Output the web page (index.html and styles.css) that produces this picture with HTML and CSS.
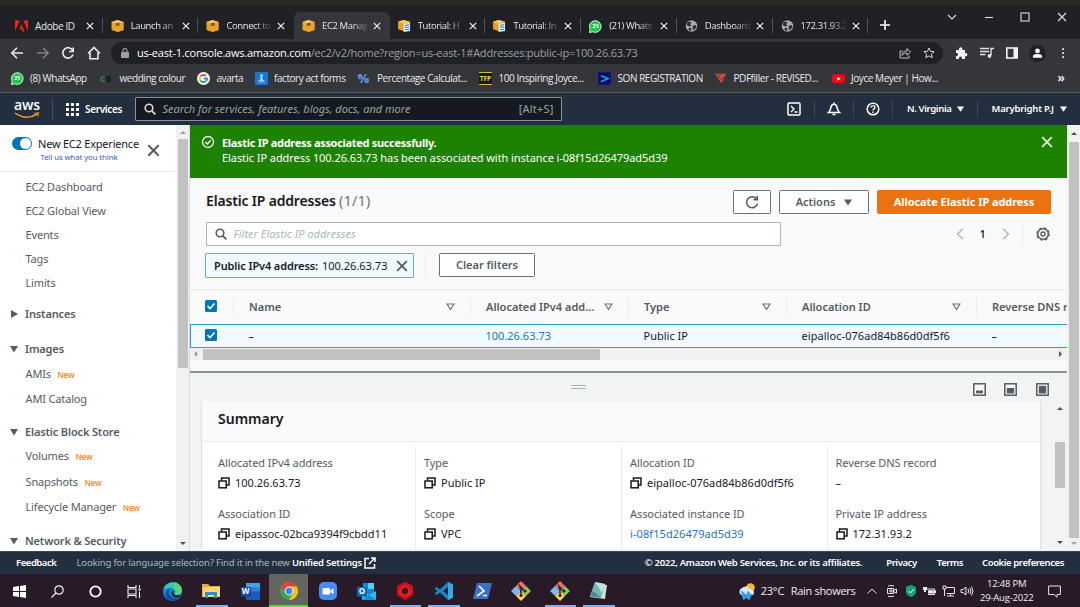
FILE: index.html
```html
<!DOCTYPE html>
<html lang="en">
<head>
<meta charset="utf-8">
<title>EC2 Management Console</title>
<link rel="stylesheet" href="styles.css">
</head>
<body>
<svg class="defs" aria-hidden="true">
  <symbol id="x" viewBox="0 0 10 10"><path d="M1 1 9 9M9 1 1 9" fill="none" stroke="currentColor" stroke-width="1.5"/></symbol>
  <symbol id="cube" viewBox="0 0 12 12"><path d="M0 2 6 0 12 2 12 10 6 12 0 10Z" fill="#e9a425"/><path d="M0 2 6 4 12 2 6 0Z" fill="#f6c467"/><path d="M6 4V12L12 10V2Z" fill="#e6a32d"/><path d="M4 3.5 8 2.5V6L6.5 5.4 5 6.5Z" fill="#7a5a1e"/></symbol>
  <symbol id="doc" viewBox="0 0 14 13"><path d="M0 2 6 0 13 2V10L6 12 0 10Z" fill="#e99c20"/><path d="M0 2 6 4 13 2 6 0Z" fill="#ffc963"/><path d="M6 4 13 3V12L6 13Z" fill="#d6efff"/><path d="M7.5 6 12 5M7.5 8 12 7.5M7.5 10.5 12 10" stroke="#247cb3"/></symbol>
  <symbol id="wa" viewBox="0 0 14 14"><path d="M.5 13.5 1.2 10A6.3 6.3 0 1 1 4 12.7Z" fill="#23c653" stroke="#e8ffe9" stroke-width="1"/></symbol>
  <symbol id="globe" viewBox="0 0 12 12"><circle cx="6" cy="6" r="5.8" fill="#a8abaf"/><path d="M2 2.5Q5 1 6 2.5L4.5 4.2 6 5.5 4 6.5 1 5ZM7 6 10.5 5 11 7 8.5 10 7.5 9.8ZM3.5 7.5 6 8.5 5.5 11 3 9.8Z" fill="#292b2e"/></symbol>
  <symbol id="search" viewBox="0 0 12 12"><circle cx="5" cy="5" r="3.8" fill="none" stroke="currentColor" stroke-width="1.6"/><path d="m7.8 7.8 3.6 3.6" stroke="currentColor" stroke-width="1.8"/></symbol>
  <symbol id="tri" viewBox="0 0 8 6"><path d="M0 0H8L4 6Z" fill="currentColor"/></symbol>
  <symbol id="sort" viewBox="0 0 9 8"><path d="M1 1H8L4.500 6.500Z" fill="none" stroke="#687078" stroke-width="1.2"/></symbol>
  <symbol id="check" viewBox="0 0 12 12"><rect width="12" height="12" rx="1.5" fill="#0073bb"/><path d="m2.500 6 2.500 2.600 4.500-5.200" fill="none" stroke="#fff" stroke-width="1.6"/></symbol>
  <symbol id="copy" viewBox="0 0 12 12"><path d="M3.500 3.500V1H11V8H8.500" fill="none" stroke="#16191f" stroke-width="1.5"/><rect x="1" y="4" width="7.200" height="6.800" fill="none" stroke="#16191f" stroke-width="1.5"/></symbol>
  <symbol id="git" viewBox="0 0 20 20"><path d="M10 0 15 5 10 10 5 5Z" fill="#f07168"/><path d="M5 5 10 10 5 15 0 10Z" fill="#80b7ef"/><path d="M15 5 20 10 15 15 10 10Z" fill="#91c75b"/><path d="M10 10 15 15 10 20 5 15Z" fill="#f7d45e"/><path d="M8 3.500 10 7V15M10 7 14 10" fill="none" stroke="#302529" stroke-width="1.500"/><circle cx="10" cy="7" r="1.600" fill="#302529"/><circle cx="14" cy="10" r="1.600" fill="#302529"/><circle cx="10" cy="14.500" r="1.600" fill="#302529"/></symbol>
</svg>

<div class="strip"></div>
<div class="tabs">
  <div class="tab"><svg class="fav" viewBox="0 0 14 12"><path d="M0 0H5L0 12ZM9 0H14V12ZM7 4 10.500 12H8L7 9.600H4.800Z" fill="#f22418"/></svg><span>Adobe ID</span><svg class="close"><use href="#x"/></svg></div>
  <div class="tab sep fade"><svg class="fav"><use href="#cube"/></svg><span>Launch an</span><svg class="close"><use href="#x"/></svg></div>
  <div class="tab sep fade"><svg class="fav"><use href="#cube"/></svg><span>Connect to</span><svg class="close"><use href="#x"/></svg></div>
  <div class="tab active fade"><svg class="fav"><use href="#cube"/></svg><span>EC2 Manag</span><svg class="close"><use href="#x"/></svg></div>
  <div class="tab fade"><svg class="fav"><use href="#doc"/></svg><span>Tutorial: H</span><svg class="close"><use href="#x"/></svg></div>
  <div class="tab sep fade"><svg class="fav"><use href="#doc"/></svg><span>Tutorial: In</span><svg class="close"><use href="#x"/></svg></div>
  <div class="tab sep fade"><i class="fav wa"><svg><use href="#wa"/></svg><b>21</b></i><span>(21) Whats</span><svg class="close"><use href="#x"/></svg></div>
  <div class="tab sep fade"><svg class="fav"><use href="#globe"/></svg><span>Dashboard</span><svg class="close"><use href="#x"/></svg></div>
  <div class="tab sep fade"><svg class="fav"><use href="#globe"/></svg><span>172.31.93.2</span><svg class="close"><use href="#x"/></svg></div>
  <div class="newtab sep"><svg width="10" height="10" viewBox="0 0 10 10"><path d="M5 0V10M0 5H10" stroke="#fff" stroke-width="1.600"/></svg></div>
  <div class="winctl">
    <svg viewBox="0 0 10 10"><path d="m1 3 4 4 4-4" /></svg>
    <svg viewBox="0 0 10 10"><path d="M1 5.500H9"/></svg>
    <svg viewBox="0 0 10 10"><rect x="1" y="1" width="8" height="8"/></svg>
    <svg viewBox="0 0 10 10"><path d="m1 1 8 8M9 1 1 9"/></svg>
  </div>
</div>

<div class="toolbar">
  <div class="nav">
    <svg viewBox="0 0 14 14"><path d="M13 7H2M7 1.800 1.800 7 7 12.200"/></svg>
    <svg class="dim" viewBox="0 0 14 14"><path d="M1 7H12M7 1.800 12.200 7 7 12.200"/></svg>
    <svg viewBox="0 0 14 14"><path d="M11.600 4.300A5.200 5.200 0 1 0 12 8.500M12.200 1.500V5.500H8"/></svg>
    <svg viewBox="0 0 14 14"><path d="M1 7.500 7 1.500 13 7.500M3 6.500V12.800H11V6.500"/></svg>
  </div>
  <div class="url">
    <svg class="lock" viewBox="0 0 8 10"><rect y="4" width="8" height="6" rx="1" fill="#9aa0a6"/><path d="M2 4V2.500a2 2 0 0 1 4 0V4" fill="none" stroke="#9aa0a6" stroke-width="1.200"/></svg>
    <span class="addr"><b>us-east-1.console.aws.amazon.com</b>/ec2/v2/home?region=us-east-1#Addresses:public-ip=100.26.63.73</span>
    <svg class="share" viewBox="0 0 12 12"><path d="M3.500 4H1V11H10V8.500M3 8.500C3 5 5 4 8 4V1.500L11.500 5 8 8.200V6C6 6 4 6.500 3 8.500Z" fill="none" stroke="#bdc1c6"/></svg>
    <svg class="star" viewBox="0 0 12 12"><path d="m6 1 1.500 3.300 3.600.4-2.700 2.400.8 3.600L6 8.900 2.800 10.700l.8-3.600L.9 4.700l3.600-.4Z" fill="none" stroke="#d5d7da"/></svg>
  </div>
  <div class="ext">
    <svg viewBox="0 0 14 14"><path d="M2 4H5V3a1.600 1.600 0 0 1 3.400 0V4H11V7h.8a1.600 1.600 0 0 1 0 3.200H11V13H8V12a1.500 1.500 0 0 0-3 0v1H2V10H3a1.600 1.600 0 0 0 0-3H2Z" fill="#f1f3f4"/></svg>
    <svg viewBox="0 0 14 14"><path d="M0 2.500H9M0 5.500H9M0 8.500H5.500M11 9.500V2.500H14" fill="none" stroke="#e2e4e6" stroke-width="1.400"/><circle cx="9.500" cy="10" r="1.900" fill="#e2e4e6"/></svg>
    <svg viewBox="0 0 14 14"><rect x="1.800" y="2" width="10.400" height="10" fill="none" stroke="#f1f3f4" stroke-width="1.600"/><path d="M8.500 2H12V12H8.500Z" fill="#f1f3f4"/></svg>
    <svg class="ava" viewBox="0 0 18 18"><circle cx="9" cy="9" r="9" fill="#202124"/><circle cx="9" cy="6.300" r="2.500" fill="#fff"/><path d="M4.200 13.500V12q0-2.400 4.800-2.400T13.800 12v1.500Z" fill="#fff"/></svg>
    <svg viewBox="0 0 14 14"><path d="M6.200 2.200H8V4H6.200ZM6.200 6.200H8V8H6.200ZM6.200 10.200H8V12H6.200Z" fill="#e8eaed"/></svg>
  </div>
</div>

<div class="bookmarks">
  <div class="bm b1"><i class="wa"><svg><use href="#wa"/></svg><b>21</b></i><span>(8) WhatsApp</span></div>
  <div class="bm b2"><i class="cb"><em>C</em>B</i><span>wedding colour</span></div>
  <div class="bm b3"><svg viewBox="0 0 14 14"><circle cx="7" cy="7" r="7" fill="#fff"/><g fill="none" stroke-width="1.900"><path d="M9.800 4.200A4 4 0 0 0 3.600 4.900" stroke="#ea4335"/><path d="M3.600 4.900a4 4 0 0 0 0 4.200" stroke="#fbbc05"/><path d="M3.600 9.100A4 4 0 0 0 9.700 9.800" stroke="#34a853"/><path d="M9.700 9.800A4 4 0 0 0 11 7H7.200" stroke="#4285f4"/></g></svg><span>avarta</span></div>
  <div class="bm b4"><svg viewBox="0 0 14 14"><rect width="14" height="14" fill="#1676d2"/><circle cx="7" cy="4" r="1.500" fill="#b8dbfa"/><path d="M6 6H8V9H10V10H4V9H6ZM3 11.500H11" fill="#b8dbfa" stroke="#b8dbfa" stroke-width=".5"/></svg><span>factory act forms</span></div>
  <div class="bm b5"><i class="pct">%</i><span>Percentage Calculat...</span></div>
  <div class="bm b6"><i class="tfp">TFP</i><span>100 Inspiring Joyce...</span></div>
  <div class="bm b7"><svg viewBox="0 0 14 14"><rect x=".5" y=".5" width="13" height="13" fill="#03077c"/><path d="m3 4 8 3-8 3.500" fill="none" stroke="#1aa9c8" stroke-width="1.600"/></svg><span>SON REGISTRATION</span></div>
  <div class="bm b8"><svg viewBox="0 0 14 14"><path d="M1 2H13L8 12Z" fill="#e4443c"/><path d="M1 2H9L5 7Z" fill="#8d4f51"/><path d="M5.500 5.500 8 8.500 11 4.500" fill="none" stroke="#8d2f31" stroke-width="1"/></svg><span>PDFfiller - REVISED...</span></div>
  <div class="bm b9"><svg viewBox="0 0 14 14"><rect x="0" y="2.500" width="14" height="9.500" rx="2.500" fill="#f40612"/><path d="m5.500 5 4 2.200-4 2.200Z" fill="#fff"/></svg><span>Joyce Meyer | How...</span></div>
  <span class="more">»</span>
</div>

<header class="aws">
  <div class="logo"><b>aws</b><svg viewBox="0 0 26 7"><path d="M1 1Q12 9 23 2" fill="none" stroke="#f79a1e" stroke-width="1.500"/><path d="M20.500 1.200 24.500.8 23.500 4.500" fill="none" stroke="#f79a1e" stroke-width="1.100"/></svg></div>
  <div class="services"><svg width="13" height="13" viewBox="0 0 13 13"><path d="M0 0H3V3H0ZM5 0H8V3H5ZM10 0H13V3H10ZM0 5H3V8H0ZM5 5H8V8H5ZM10 5H13V8H10ZM0 10H3V13H0ZM5 10H8V13H5ZM10 10H13V13H10Z" fill="#fff"/></svg><span>Services</span></div>
  <div class="awssearch"><svg><use href="#search"/></svg><em>Search for services, features, blogs, docs, and more</em><span>[Alt+S]</span></div>
  <div class="awsright">
    <div class="ic"><svg viewBox="0 0 14 14"><rect x="1" y="1" width="12" height="12" rx="1" fill="none" stroke="#fff" stroke-width="1.500"/><path d="m4 4 3 3-3 3M7.500 10H10.500" fill="none" stroke="#fff" stroke-width="1.300"/></svg></div>
    <div class="ic bar"><svg viewBox="0 0 14 14"><path d="M1.500 10.500C3.500 9 3.500 7 4 5 4.600 3 5.500 2.200 7 2.200S9.400 3 10 5C10.500 7 10.500 9 12.500 10.500ZM7 .5V2M5.500 12.500H8.500" fill="none" stroke="#fff" stroke-width="1.500"/></svg></div>
    <div class="ic bar"><svg viewBox="0 0 14 14"><circle cx="7" cy="7" r="5.800" fill="none" stroke="#fff" stroke-width="1.500"/><path d="M5 5.600C5 3.200 9 3.200 9 5.600 9 7 7 6.800 7 8.500M7 9.500V11" fill="none" stroke="#fff" stroke-width="1.300"/></svg></div>
    <div class="menu bar region"><span>N. Virginia</span><svg><use href="#tri"/></svg></div>
    <div class="menu bar user"><span>Marybright P.J</span><svg><use href="#tri"/></svg></div>
  </div>
</header>

<div class="body">
  <aside class="side">
    <div class="sidehead"><i class="toggle"></i><div><p>New EC2 Experience</p><a>Tell us what you think</a></div><svg class="sx"><use href="#x"/></svg></div>
    <ul class="g1"><li><span>EC2 Dashboard</span></li><li><span>EC2 Global View</span></li><li><span>Events</span></li><li><span>Tags</span></li><li><span>Limits</span></li></ul>
    <h4 class="inst"><svg viewBox="0 0 8 8"><path d="M1 0 8 4 1 8Z"/></svg><span>Instances</span></h4>
    <h4><svg viewBox="0 0 8 8"><path d="M0 1H8L4 7.500Z"/></svg><span>Images</span></h4>
    <ul><li><span>AMIs</span><b>New</b></li><li><span>AMI Catalog</span></li></ul>
    <h4><svg viewBox="0 0 8 8"><path d="M0 1H8L4 7.500Z"/></svg><span>Elastic Block Store</span></h4>
    <ul><li><span>Volumes</span><b>New</b></li><li><span>Snapshots</span><b>New</b></li><li><span>Lifecycle Manager</span><b>New</b></li></ul>
    <h4 class="net"><svg viewBox="0 0 8 8"><path d="M0 1H8L4 7.500Z"/></svg><span>Network &amp; Security</span></h4>
  </aside>
  <div class="vbar left"><i class="up dimmed"></i><div class="thumb"></div><i class="down"></i></div>

  <main>
    <div class="flash">
      <svg viewBox="0 0 14 14"><circle cx="7" cy="7" r="5.500" fill="none" stroke="#fff" stroke-width="1.300"/><path d="m4.300 7 2 2 3.400-3.800" fill="none" stroke="#fff" stroke-width="1.300"/></svg>
      <div><b>Elastic IP address associated successfully.</b><p>Elastic IP address 100.26.63.73 has been associated with instance i-08f15d26479ad5d39</p></div>
      <svg class="fx"><use href="#x"/></svg>
    </div>
    <section class="list">
      <div class="titlebar">
        <h2>Elastic IP addresses <span>(1/1)</span></h2>
        <button class="btn refresh"><svg viewBox="0 0 14 14"><path d="M11.800 4.300A5.500 5.500 0 1 0 12.500 8.500M12.300.800V4.800H8.300" fill="none" stroke="#545b64" stroke-width="1.500"/></svg></button>
        <button class="btn actions"><span>Actions</span><svg><use href="#tri"/></svg></button>
        <button class="btn primary">Allocate Elastic IP address</button>
      </div>
      <div class="filterbar">
        <div class="filter"><svg><use href="#search"/></svg><em>Filter Elastic IP addresses</em></div>
        <div class="pager"><svg viewBox="0 0 8 12"><path d="M7 .800 1.500 6 7 11.200"/></svg><b>1</b><svg viewBox="0 0 8 12"><path d="M1 .800 6.500 6 1 11.200"/></svg></div>
        <svg class="gear" viewBox="0 0 14 14"><circle cx="7" cy="7" r="5.300" fill="none" stroke="#545b64" stroke-width="1.500"/><circle cx="7" cy="7" r="6.200" fill="none" stroke="#545b64" stroke-width="1.200" stroke-dasharray="2.600 2.270"/><circle cx="7" cy="7" r="2" fill="none" stroke="#545b64" stroke-width="1.400"/></svg>
      </div>
      <div class="chips"><div class="chip"><b>Public IPv4 address:</b><span>100.26.63.73</span><svg><use href="#x"/></svg></div><i></i><button class="btn clear">Clear filters</button></div>
      <div class="row head">
        <div class="c0"><svg><use href="#check"/></svg></div>
        <div class="c1"><span>Name</span><svg><use href="#sort"/></svg></div>
        <div class="c2"><span>Allocated IPv4 add...</span><svg><use href="#sort"/></svg></div>
        <div class="c3"><span>Type</span><svg><use href="#sort"/></svg></div>
        <div class="c4"><span>Allocation ID</span><svg><use href="#sort"/></svg></div>
        <div class="c5"><span>Reverse DNS record</span></div>
      </div>
      <div class="row sel">
        <div class="c0"><svg><use href="#check"/></svg></div>
        <div class="c1"><span>–</span></div>
        <div class="c2"><a>100.26.63.73</a></div>
        <div class="c3"><span>Public IP</span></div>
        <div class="c4"><span>eipalloc-076ad84b86d0df5f6</span></div>
        <div class="c5"><span>–</span></div>
      </div>
      <div class="hbar"><i class="lf"></i><div class="thumb"></div><i class="rt"></i></div>
    </section>
    <section class="split">
      <div class="splitbar">
        <i class="grip"></i>
        <svg viewBox="0 0 13 13"><rect x=".800" y=".800" width="11.400" height="11.400" fill="#fafafa" stroke="#545b64" stroke-width="1.500"/><path d="M3 7.500H10V10.300H3Z" fill="#545b64"/></svg>
        <svg viewBox="0 0 13 13"><rect x=".800" y=".800" width="11.400" height="11.400" fill="#fafafa" stroke="#545b64" stroke-width="1.500"/><path d="M2.800 5H10.200V10.500H2.800Z" fill="#545b64"/></svg>
        <svg viewBox="0 0 13 13"><rect x=".800" y=".800" width="11.400" height="11.400" fill="#fafafa" stroke="#545b64" stroke-width="1.500"/><path d="M2.800 2.800H10.200V10.500H2.800Z" fill="#545b64"/></svg>
      </div>
      <div class="splitbody">
        <div class="card">
          <h3><span>Summary</span></h3>
          <div class="cols">
            <dl><dt>Allocated IPv4 address</dt><dd><svg><use href="#copy"/></svg><span>100.26.63.73</span></dd><dt>Association ID</dt><dd><svg><use href="#copy"/></svg><span>eipassoc-02bca9394f9cbdd11</span></dd></dl>
            <dl><dt>Type</dt><dd><svg><use href="#copy"/></svg><span>Public IP</span></dd><dt>Scope</dt><dd><svg><use href="#copy"/></svg><span>VPC</span></dd></dl>
            <dl><dt>Allocation ID</dt><dd><svg><use href="#copy"/></svg><span>eipalloc-076ad84b86d0df5f6</span></dd><dt>Associated instance ID</dt><dd><a>i-08f15d26479ad5d39</a></dd></dl>
            <dl><dt>Reverse DNS record</dt><dd><span>–</span></dd><dt>Private IP address</dt><dd><svg><use href="#copy"/></svg><span>172.31.93.2</span></dd></dl>
          </div>
        </div>
        <div class="vbar inner"><i class="up"></i><div class="thumb"></div><i class="down"></i></div>
      </div>
    </section>
  </main>
  <div class="vbar right"><i class="up"></i><div class="thumb"></div><i class="down dimmed"></i></div>
</div>

<footer>
  <b class="fb">Feedback</b>
  <p>Looking for language selection? Find it in the new <b>Unified Settings</b></p>
  <svg class="out" viewBox="0 0 12 12"><path d="M5 1.500H1V11H10.500V7M7 1H11V5M11 1 5 7" fill="none" stroke="#fff" stroke-width="1.500"/></svg>
  <b class="copy">© 2022, Amazon Web Services, Inc. or its affiliates.</b><b class="priv">Privacy</b><b class="terms">Terms</b><b class="cook">Cookie preferences</b>
</footer>

<div class="taskbar">
  <div class="t"><svg width="13" height="13" viewBox="0 0 13 13"><path d="M0 2 6 1V6H0ZM7 .900 13 0V6H7ZM0 7H6V12L0 11ZM7 7H13V13L7 12.100Z" fill="#fff"/></svg></div>
  <div class="t"><svg width="13" height="13" viewBox="0 0 13 13"><circle cx="8" cy="5" r="4.200" fill="none" stroke="#eee" stroke-width="1.200"/><path d="M5 8 .500 12.500" stroke="#eee" stroke-width="1.200"/></svg></div>
  <div class="t"><svg width="13" height="13" viewBox="0 0 13 13"><circle cx="6.500" cy="6.500" r="5.200" fill="none" stroke="#fff" stroke-width="1.800"/></svg></div>
  <div class="t"><svg width="14" height="13" viewBox="0 0 14 13"><path d="M1 0V2.500H9V0M1 13V10.500H9V13M1 4H9V9H1ZM12.500 0V3M12.500 6.500V13" fill="none" stroke="#eee" stroke-width="1.100"/><path d="M11.600 3.500H13.500V5.500H11.600Z" fill="#fff"/></svg></div>
  <div class="t edge"><svg width="19" height="19" viewBox="0 0 19 19"><circle cx="9.500" cy="9.500" r="9.500" fill="#1688d6"/><path d="M.500 7.500C3-2 18-2 19 8.500 19 12 15 13.500 11.500 12.500 14 9 11 5.500 7.500 5.500 4 5.500 1.500 7 .500 7.500Z" fill="#38c8b4"/><path d="M12 0C17 2 19 5 19 8.500 19 12 15 13.500 11.500 12.500 14 10 12 7 10 6Z" fill="#52d57a"/><path d="M7.500 7C4 10 7 16.500 14 16.500 15.500 16.500 17 15.500 17.500 15 14 20 6 20 3 15 1 11 4 7.500 7.500 7Z" fill="#0d4fa3"/><path d="M11 9.500C9 11.500 12 14 16 13L17.500 12.500 16.500 15.300C10 17 7.500 12 9 9Z" fill="#281b27"/></svg></div>
  <div class="t open"><svg width="18" height="16" viewBox="0 0 18 16"><path d="M0 1H6L8 3H18V14H0Z" fill="#e9a83d"/><path d="M1 4H18V14H1Z" fill="#ffd56d"/><path d="M3 9H15V15H12V12H6V15H3Z" fill="#318fd0"/></svg></div>
  <div class="t"><svg width="19" height="17" viewBox="0 0 19 17"><path d="M5 0H19V17H5Z" fill="#2b7cd3"/><path d="M5 0H19V4.300H5Z" fill="#41a5ee"/><path d="M5 8.500H19V17H5Z" fill="#185abd"/><rect y="4" width="10" height="9.500" fill="#164b9f"/></svg><b class="ltr">W</b></div>
  <div class="t open now"><svg width="18" height="18" viewBox="0 0 18 18"><circle cx="9" cy="9" r="9" fill="#35a853"/><path d="M1.200 4.500A9 9 0 0 1 16.800 4.500H9L5.500 11.500Z" fill="#e74435"/><path d="M16.800 4.500A9 9 0 0 1 9 18L13 11 9 4.500Z" fill="#fbc116"/><circle cx="9" cy="9" r="4.400" fill="#fff"/><circle cx="9" cy="9" r="3.400" fill="#4285f4"/></svg></div>
  <div class="t"><svg width="18" height="18" viewBox="0 0 18 18"><rect width="18" height="18" rx="5" fill="#468bfa"/><rect x="3.500" y="6" width="7.500" height="6.500" rx="1.200" fill="#fff"/><path d="M11.500 8.500 14.500 6.200V12.300L11.500 10.200Z" fill="#fff"/></svg></div>
  <div class="t"><svg width="19" height="17" viewBox="0 0 19 17"><path d="M6 0H17V12H6Z" fill="#1289d8"/><path d="M11 0H17V6H11Z" fill="#50d2fa"/><path d="M5 8 12 12 19 8V17H5Z" fill="#39b6ee"/><path d="M12 12 19 17H5Z" fill="#168be0"/><rect y="4" width="10" height="9.500" fill="#0869b5"/></svg><b class="ltr">O</b></div>
  <div class="t open"><svg width="18" height="18" viewBox="0 0 18 18"><path d="M9 0 17 4V13L9 18 1 13V4Z" fill="#cf1018"/><path d="M5 5 9 3 13 5 16 10 12 14H6L2 10Z" fill="#df2228"/><path d="M9 5.500 12 7.200V10.800L9 12.500 6 10.800V7.200Z" fill="#3b1820"/></svg></div>
  <div class="t open"><svg width="18" height="18" viewBox="0 0 18 18"><path d="M13 0 18 2.500V15.500L13 18 5 10.500 1.500 13 0 12V11L2.500 9 0 7V6L1.500 5 5 7.500ZM13 5 8 9 13 13Z" fill="#1688cf" fill-rule="evenodd"/><path d="M13 0 18 2.500V15.500L13 18Z" fill="#36a8eb"/></svg></div>
  <div class="t"><svg width="19" height="16" viewBox="0 0 19 16"><path d="M4 0H19L15 16H0Z" fill="#3c6ec4"/><path d="M6 3 11 8 4 13M10 12.500H14" fill="none" stroke="#fff" stroke-width="1.600"/></svg></div>
  <div class="t"><svg width="20" height="20"><use href="#git"/></svg></div>
  <div class="t open"><svg width="20" height="20"><use href="#git"/></svg></div>
  <div class="t open"><svg width="19" height="18" viewBox="0 0 19 18"><path d="M6 1 18 3 16 17 1 15Z" fill="#d8dfdc"/><path d="M6 0 16 2 12 16 1 14Z" fill="#6fb7b9"/><path d="M6 0 16 2 13 11Z" fill="#bbe3dd"/><path d="M4 9 12 16 1 14Z" fill="#45868f"/></svg></div>
  <div class="tray">
    <svg class="weather" viewBox="0 0 18 17"><circle cx="12.500" cy="4.500" r="4.300" fill="#f9b52b"/><path d="M3 12a4 4 0 0 1 1-7 5 5 0 0 1 8 1 3.500 3.500 0 0 1 3 6Z" fill="#d9e9fa"/><path d="M4 9 6.500 11 5 14ZM10 9 13 12 11 16 8 14ZM5 12 7 14 6 16Z" fill="#3b9cec" stroke="#3b9cec" stroke-width="1.500"/></svg>
    <span class="temp">23°C</span><span class="rain">Rain showers</span>
    <svg class="i1" viewBox="0 0 12 12"><path d="m1.500 8.500 4.500-4.500 4.500 4.500"/></svg>
    <svg class="i2" viewBox="0 0 12 12"><path d="M1.500 3.500H7.500V8.500H1.500ZM7.500 5.500 10.500 4V8L7.500 6.700M2 1Q5 0 8 1M2 11.200Q5 12.300 8 11.200M4 5H6V7H4Z"/></svg>
    <svg class="i3" viewBox="0 0 12 12"><path d="M6 0 11 2V6.500Q11 10 6 12 1 10 1 6.500V2Z" fill="#17a17d" stroke="none"/><path d="m3.500 6 2 2L9 4" stroke="#fff"/></svg>
    <svg class="i4" viewBox="0 0 13 12"><path d="M3.500 4H11.500V9.500H5" /><path d="M5 5.200H10.800V8.500H5ZM12 5.500H13V8H12ZM0 2H4V5H3V7H1V5H0Z" fill="#eee" stroke="none"/></svg>
    <svg class="i5" viewBox="0 0 13 12"><path d="M4.500 2.500H12.500V8.500H4.500M8.500 8.500V11M5 11H12M1 1H4V4H1ZM2.500 4V11"/></svg>
    <svg class="i6" viewBox="0 0 14 12"><path d="M1 4.500H3L6 2V10L3 7.500H1ZM8 4Q9.500 6 8 8M9.800 2.800Q12 6 9.800 9.200M11.500 1.500Q14.500 6 11.500 10.500"/></svg>
    <div class="clock"><span>12:48 PM</span><span>29-Aug-2022</span></div>
    <svg class="note" viewBox="0 0 13 13"><path d="M.600 1H12.400V9.500H9V12.300L6.200 9.500H.600Z"/></svg>
  </div>
</div>
</body>
</html>
```

FILE: styles.css
```css
* { box-sizing: border-box; margin: 0; padding: 0; }
body { width: 1080px; height: 607px; overflow: hidden; display: flex; flex-direction: column; font: 11px/14px "Noto Sans", "Open Sans", sans-serif; color: #16191f; background: #f2f3f3; }
.defs { position: absolute; width: 0; height: 0; }
svg { flex: none; display: block; }
span, b, a, em, p { white-space: nowrap; }
i { font-style: normal; }
ul { list-style: none; }

/* browser chrome */
.strip { height: 5px; flex: none; background: #2a2927; }
.tabs { height: 34px; flex: none; background: #202124; display: flex; padding: 7px 0 0 7px; font: 10px/14px "Open Sans", sans-serif; color: #e3e5e8; }
.tab { width: 95.7px; flex: none; display: flex; align-items: center; padding-left: 8px; position: relative; }
.tab .fav { width: 13px; height: 12px; margin-right: 7px; }
.tab span { width: 47px; letter-spacing: -.4px; }
.fade span { -webkit-mask-image: linear-gradient(90deg, #000 65%, rgba(0,0,0,.15) 100%); mask-image: linear-gradient(90deg, #000 65%, rgba(0,0,0,.15) 100%); width: 45px; margin-right: 2px; font-size: 9.500px; }
.close { width: 8px; height: 8px; margin-left: 4px; color: #f1f3f4; }
.sep::before { content: ""; position: absolute; left: -1px; top: 6px; width: 1px; height: 15px; background: #505256; }
.active { background: #35363a; border-radius: 6px 6px 0 0; }
.wa { position: relative; display: block; width: 13px; height: 13px; flex: none; }
.wa svg { width: 13px; height: 13px; }
.wa b { position: absolute; inset: 0; text-align: center; color: #fff; font: 700 6px/12px "Open Sans", sans-serif; }
.newtab { position: relative; width: 40px; padding: 8px 0 0 12px; }
.winctl { margin: -2px 13.500px 0 auto; display: flex; gap: 26.500px; padding-top: 2px; }
.winctl svg { width: 10px; height: 10px; fill: none; stroke: #e0e0e0; stroke-width: 1.1; }
.toolbar { height: 28px; flex: none; background: #35363a; display: flex; align-items: center; padding-left: 10px; }
.nav { display: flex; gap: 11.5px; width: 101px; }
.nav svg { width: 14px; height: 14px; fill: none; stroke: #e8eaed; stroke-width: 1.6; }
.nav .dim { stroke: #7d8085; }
.url { width: 832px; height: 22px; border-radius: 11px; background: #202124; display: flex; align-items: center; padding: 0 8px 0 10px; }
.lock { width: 8px; height: 10px; margin-right: 8px; }
.addr { color: #9aa0a6; font: 11px/16px "Open Sans", sans-serif; flex: 1; letter-spacing: -.22px; }
.addr b { color: #fff; font-weight: 400; }
.share, .star { width: 12px; height: 12px; }
.star { margin-left: 12px; }
.ext { display: flex; align-items: center; margin-left: 11px; gap: 11.500px; }
.ext svg { width: 14px; height: 14px; }
.ext .ava { width: 17px; height: 17px; margin: 0 -1.5px; }
.bookmarks { height: 26px; flex: none; background: #35363a; border-bottom: 1px solid #55575b; display: flex; align-items: center; padding: 0 0 3px 10.500px; font: 10px/14px "Open Sans", sans-serif; color: #e8eaed; }
.bm { display: flex; align-items: center; gap: 6.500px; flex: none; letter-spacing: -.44px; }
.bm > svg, .bm > i { width: 13px; height: 13px; flex: none; }
.b1 { width: 89.500px; } .b2 { width: 97px; } .b3 { width: 57.500px; } .b4 { width: 103px; } .b5 { width: 121.500px; } .b6 { width: 119px; } .b7 { width: 116px; } .b8 { width: 117.500px; } .b9 { width: 220px; }
.cb { font: 700 9px/13px "Open Sans", sans-serif; color: #171717; }
.cb em { font-style: normal; color: #397c7c; }
.pct { font: 700 13px/13px "Open Sans", sans-serif; color: #679bf0; letter-spacing: -1px; }
.tfp { background: #181a17; border-top: 1px solid #d7bb42; border-bottom: 1px solid #d7bb42; color: #e4cf73; font: 700 6.500px/11px "Open Sans", sans-serif; letter-spacing: 0; text-align: center; }
.more { margin-left: 6px; font-weight: 700; font-size: 12px; }

/* console header */
.aws { height: 32px; flex: none; background: #232f3e; display: flex; align-items: center; color: #fff; }
.logo { width: 52.500px; height: 22px; padding: 1px 0 0 14px; border-right: 1px solid #414d5c; }
.logo b { display: block; font: 600 14px/11px "Open Sans", sans-serif; height: 13px; letter-spacing: -.2px; }
.logo svg { width: 26px; height: 7px; }
.services { width: 82px; padding-left: 13.500px; display: flex; align-items: center; gap: 6px; font-weight: 600; font-size: 10px; letter-spacing: -.35px; }
.awssearch { width: 427px; height: 24px; border: 1px solid #87929d; background: #16191f; border-radius: 1px; display: flex; align-items: center; padding: 0 7px 0 8px; color: #95a5a6; }
.awssearch svg { width: 12px; height: 12px; color: #d5dbdb; margin-right: 7px; }
.awssearch em { flex: 1; font-size: 11px; letter-spacing: -.02px; }
.awssearch span { letter-spacing: .2px; }
.awsright { margin-left: auto; display: flex; align-items: center; font-weight: 600; font-size: 9.500px; }
.ic { width: 39.200px; height: 18px; display: flex; align-items: center; justify-content: center; }
.ic svg { width: 14px; height: 14px; }
.bar { border-left: 1px solid #3b4756; }
.menu { height: 18px; display: flex; align-items: center; padding-left: 14px; }
.menu svg { width: 7px; height: 6px; margin-left: 6px; }
.region { width: 84.500px; } .user { width: 103.500px; }
.menu span { letter-spacing: -.35px; }
.user span { letter-spacing: -.2px; }

/* body frame */
.body { height: 426px; flex: none; display: flex; }
.vbar { width: 13px; flex: none; background: #f1f1f1; display: flex; flex-direction: column; align-items: center; }
.vbar .thumb { width: 10px; background: #c1c1c1; }
.up, .down { width: 0; height: 0; border: 3px solid transparent; }
.up { border-bottom-color: #505050; border-top: 0; }
.down { border-top-color: #505050; border-bottom: 0; margin-top: auto; }
.vbar .dimmed { opacity: .5; }
.left { border-right: 1px solid #d5dbdb; width: 14px; }
.left .up { margin: 6px 0 5px; } .left .thumb { height: 229px; } .left .down { margin-bottom: 6px; }
.right .up { margin: 7px 0 7px; } .right .thumb { height: 396px; } .right .down { margin-bottom: 6px; }

/* side navigation */
.side { width: 176px; flex: none; background: #fff; color: #545b64; overflow: hidden; letter-spacing: -.15px; }
.sidehead { height: 47px; border-bottom: 1px solid #eaeded; padding: 11px 0 0 12px; display: flex; }
.toggle { width: 20px; height: 13px; border-radius: 7px; background: #0073bb; margin: 1px 6px 0 0; padding: 1px; display: flex; justify-content: flex-end; }
.toggle::after { content: ""; width: 11px; height: 11px; border-radius: 50%; background: #fff; }
.sidehead div { width: 109px; }
.sidehead p { color: #16191f; font-size: 11px; line-height: 15px; letter-spacing: -.22px; }
.sidehead a { display: block; color: #3b5bc4; font-size: 7.800px; line-height: 12px; padding-left: 2.500px; letter-spacing: -.1px; }
.sx { width: 13px; height: 13px; margin-top: 8px; margin-left: 0; }
.side li { height: 25.200px; display: flex; align-items: center; padding-left: 25.500px; }
.side .g1 { padding-top: 3.500px; } .side .g1 li { height: 23.800px; }
.side li b { color: #ff8a1f; font-size: 8px; font-weight: 600; margin: 2px 0 0 6.500px; }
.side h4 { height: 32.500px; padding-top: 8px; display: flex; align-items: center; font-size: 11px; font-weight: 600; }
.side h4 svg { width: 8px; height: 8px; margin: 0 7px 0 10px; fill: #545b64; }
.side h4.inst { height: 36px; padding-top: 4px; margin-bottom: -2px; }
.side h4.net { padding-top: 11px; }

/* main column */
main { width: 877px; flex: none; display: flex; flex-direction: column; overflow: hidden; }
.flash { height: 53px; flex: none; background: #1d8102; color: #fff; display: flex; padding: 10px 0 0 11px; line-height: 16px; }
.flash svg { width: 14px; height: 14px; margin-right: 7px; }
.flash div { flex: 1; }
.flash b { display: block; font-weight: 700; line-height: 15px; letter-spacing: -.31px; }
.flash p { letter-spacing: -.07px; }
.flash .fx { width: 12px; height: 12px; margin: 1px 14px 0 0; color: #dff3da; }
.list { background: #fafafa; flex: none; height: 193px; }
.titlebar { height: 44px; padding: 12px 16px 0 16px; display: flex; gap: 8px; }
h2 { flex: 1; font: 600 14px/22px "Noto Sans", sans-serif; letter-spacing: -.18px; }
h2 span { color: #687078; font-weight: 400; letter-spacing: .4px; }
.btn { height: 24px; background: #fff; border: 1px solid #687078; border-radius: 1.500px; color: #545b64; font: 600 11px/22px "Noto Sans", sans-serif; display: flex; align-items: center; justify-content: center; white-space: nowrap; }
.refresh { width: 38px; } .refresh svg { width: 14px; height: 14px; }
.actions { width: 90px; gap: 9px; } .actions svg { width: 8px; height: 7px; }
.primary { width: 174px; background: #ec7211; border-color: #ec7211; color: #fff; font-weight: 700; letter-spacing: -.07px; }
.filterbar { height: 31px; padding-left: 15.500px; display: flex; align-items: flex-start; }
.filter { width: 575px; height: 24px; background: #fff; border: 1px solid #aab7b8; display: flex; align-items: center; padding-left: 8px; }
.filter svg { width: 12px; height: 12px; color: #545b64; margin-right: 7px; }
.filter em { color: #aab7b8; font-size: 11px; }
.pager { width: 242px; height: 24px; display: flex; align-items: center; justify-content: flex-end; padding-right: 12px; border-right: 1px solid #eaeded; }
.pager svg { width: 8px; height: 12px; fill: none; stroke: #aab7b8; stroke-width: 1.400; }
.pager b { width: 38px; text-align: center; font-size: 10px; font-weight: 600; }
.gear { width: 14px; height: 14px; margin: 5px 0 0 13px; }
.chips { height: 36px; padding-left: 15px; display: flex; align-items: flex-start; }
.chip { width: 209px; height: 25px; background: #f1faff; border: 1px solid #58b5cc; border-radius: 1px; display: flex; align-items: center; padding-left: 8px; }
.chip b { font-weight: 600; margin-right: 4px; letter-spacing: -.12px; }
.chip svg { width: 12px; height: 12px; margin-left: 8.500px; color: #545b64; }
.chips > i { width: 12px; height: 24px; border-right: 1px solid #eaeded; margin-right: 13px; }
.clear { width: 96px; }
.row { display: flex; align-items: center; overflow: hidden; }
.row > div { flex: none; display: flex; align-items: center; padding-left: 15.500px; height: 18px; white-space: nowrap; }
.head { height: 35px; border-top: 1px solid #eaeded; color: #545b64; font-weight: 600; }
.head > div + div { border-left: 1px solid #eaeded; padding-left: 15px; }
.head svg { width: 9px; height: 8px; margin: 0 15px 0 auto; }
.row .c0 svg { width: 12px; height: 12px; margin: 0 0 2px; }
.c0 { width: 43px; } .c1 { width: 237px; } .c2 { width: 158px; } .c3 { width: 158px; } .c4 { width: 190px; }
.c0 { padding-left: 15px !important; }
.sel { height: 24px; background: #f1faff; border: 1px solid #2ea0b5; border-right: 0; }
.sel .c0 { margin-left: -1px; }
.sel .c4 span { letter-spacing: .06px; }
.sel a { color: #2074c2; }
.hbar { height: 12px; background: #f1f1f1; display: flex; align-items: center; }
.hbar .thumb { width: 397px; height: 11px; background: #c1c1c1; }
.lf, .rt { width: 0; height: 0; border: 3px solid transparent; }
.lf { border-right-color: #999; border-left: 0; margin: 0 6px 0 4px; }
.rt { border-left-color: #505050; border-right: 0; margin: 0 5px 0 auto; }

/* split panel */
.split { flex: 1; background: #f2f3f3; border-top: 2px solid #879596; display: flex; flex-direction: column; }
.splitbar { height: 28px; flex: none; display: flex; align-items: center; padding: 4px 18.500px 0 381px; gap: 18.500px; }
.grip { width: 15px; height: 4px; border: 1px solid #aab7b8; border-width: 1px 0; margin: -4px auto 0 0; }
.splitbar svg { width: 13px; height: 13px; }
.splitbody { flex: 1; display: flex; padding: 0 0 2px 12px; }
.card { width: 838px; background: #fff; box-shadow: 0 0 1.500px #aaa; clip-path: inset(0 -2px 0 -2px); }
h3 { height: 41px; background: #fafafa; border-bottom: 1px solid #eaeded; padding-left: 16px; font: 600 14px/35px "Noto Sans", sans-serif; }
.cols { display: grid; grid-template-columns: 213px 206px 205.500px 1fr; padding-top: 4px; height: 107px; }
dl { padding: 8px 0 0 8px; border-left: 1px solid #eaeded; }
dl:first-child { padding-left: 16px; border-left: 0; }
dt { color: #545b64; line-height: 18px; height: 17px; white-space: nowrap; letter-spacing: -.08px; }
dd { display: flex; align-items: center; height: 23px; margin-bottom: 11px; }
dd svg { width: 12px; height: 12px; margin-right: 5px; }
dd a { color: #2074c2; letter-spacing: .08px; }
.inner { margin-left: 13px; background: none; }
.inner .up { margin: 6px 0 32px; } .inner .thumb { height: 46px; } .inner .down { margin-bottom: 5px; }

/* footer and taskbar */
footer { height: 23px; flex: none; background: #232f3e; color: #fff; display: flex; align-items: center; font-size: 9.500px; padding-left: 16px; border-top: 1px solid #3a4654; letter-spacing: -.15px; }
footer b { font-weight: 600; }
.fb { width: 60.500px; letter-spacing: -.45px; }
footer p { color: #aab7b8; }
footer p b { color: #fff; letter-spacing: -.25px; }
.out { width: 12px; height: 12px; margin-left: 2px; }
.copy { margin-left: auto; letter-spacing: -.27px; }
.priv { margin-left: 24px; letter-spacing: -.4px; } .terms { margin-left: 20px; letter-spacing: -.4px; } .cook { margin: 0 16px 0 19px; letter-spacing: -.4px; }
.taskbar { height: 33px; flex: none; background: #281b27; display: flex; color: #f0eef0; font: 11px/14px "Open Sans", sans-serif; }
.t { width: 38.750px; flex: none; display: flex; align-items: center; justify-content: center; position: relative; padding-top: 1px; }
.t:nth-child(-n+4) { width: 38.300px; }
.open::after { content: ""; position: absolute; bottom: 0; left: 4px; right: 3px; height: 2px; background: #78b4ed; }
.now { background: #65655f; }
.now::after { background: #4ee32b; left: 0; right: 0; }
.ltr { position: absolute; left: 10px; top: 11px; width: 10px; text-align: center; font: 700 8px/12px "Open Sans", sans-serif; color: #fff; }
.tray { flex: 1; display: flex; align-items: center; padding: 1px 0 0 119.500px; }
.tray svg { width: 12px; height: 12px; fill: none; stroke: #e8e5e8; stroke-width: 1; }
.tray .weather { width: 18px; height: 17px; margin-right: 5px; stroke: none; }
.temp { width: 30px; letter-spacing: -.2px; } .rain { width: 75px; letter-spacing: -.3px; }
.tray .i2 { margin-left: 8px; } .tray .i3 { margin-left: 7px; } .tray .i4 { margin-left: 6px; width: 13px; } .tray .i5 { margin-left: 6px; width: 13px; } .tray .i6 { margin-left: 5px; width: 14px; }
.clock { width: 58px; margin-left: 4px; font-size: 9.500px; line-height: 14px; display: flex; flex-direction: column; align-items: center; }
.clock span { letter-spacing: -.2px; }
.tray .note { width: 13px; height: 13px; margin: 0 0 0 12px; }
```
